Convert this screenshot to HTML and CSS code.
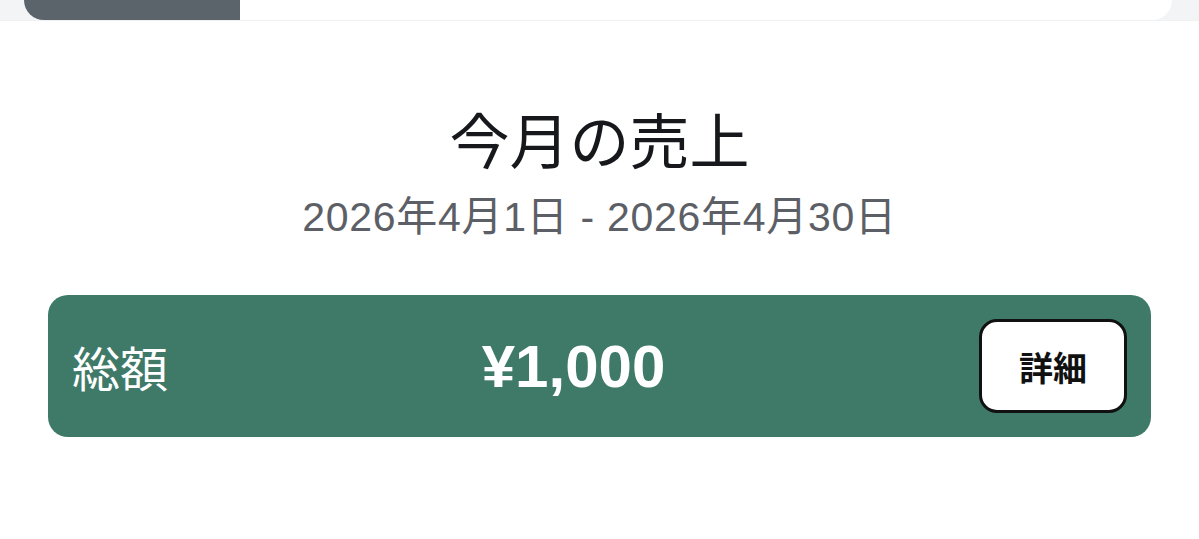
FILE: index.html
```html
<!DOCTYPE html>
<html lang="ja">
<head>
<meta charset="utf-8">
<link rel="stylesheet" href="styles.css">
</head>
<body>
  <header class="topbar">
    <div class="segments">
      <div class="seg seg-active"></div>
      <div class="seg seg-rest"></div>
    </div>
  </header>
  <main class="main">
    <h1 class="title">今月の売上</h1>
    <p class="period">2026年4月1日 - 2026年4月30日</p>
    <section class="total-card">
      <span class="total-label">総額</span>
      <span class="total-amount">¥1,000</span>
      <button class="detail-btn">詳細</button>
    </section>
  </main>
</body>
</html>
```
FILE: styles.css
```css
html, body {
  margin: 0;
  padding: 0;
  background: #ffffff;
  font-family: "Liberation Sans", "Noto Sans CJK JP", sans-serif;
}

.topbar {
  height: 21px;
  background: #f3f4f6;
  padding: 0 27px 0 24px;
  border-bottom: 1px solid #f0f1f3;
  box-sizing: border-box;
}

.segments {
  display: flex;
  height: 100%;
  border-radius: 0 0 20px 20px;
  overflow: hidden;
}

.seg-active {
  width: 216px;
  background: #5b636b;
}

.seg-rest {
  flex: 1;
  background: #ffffff;
}

.main {
  display: flex;
  flex-direction: column;
  align-items: center;
  padding: 0 48px;
}

.title {
  margin: 82px 0 0;
  font-size: 60px;
  line-height: 70px;
  font-weight: 400;
  color: #16181c;
  font-family: "Noto Sans CJK JP", sans-serif;
}

.period {
  margin: 20px 0 0;
  font-size: 41px;
  line-height: 48px;
  letter-spacing: 0.7px;
  color: #5c6066;
}

.total-card {
  align-self: stretch;
  margin-top: 54px;
  height: 142px;
  box-sizing: border-box;
  padding: 0 24px;
  background: #3f7a68;
  border-radius: 20px;
  display: flex;
  align-items: center;
  justify-content: space-between;
  color: #ffffff;
}

.total-label {
  font-size: 48px;
  font-family: "Noto Sans CJK JP", sans-serif;
  font-weight: 400;
}

.total-amount {
  font-size: 60px;
  font-weight: 700;
}

.detail-btn {
  width: 148px;
  height: 94px;
  background: #ffffff;
  border: 3px solid #111111;
  border-radius: 18px;
  font-family: "Noto Sans CJK JP", sans-serif;
  font-size: 34px;
  font-weight: 700;
  color: #111111;
  padding: 0;
  cursor: pointer;
}
```
